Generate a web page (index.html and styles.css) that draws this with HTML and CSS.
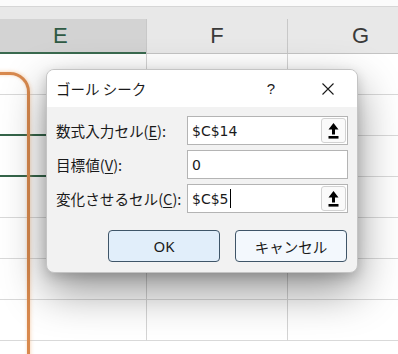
FILE: index.html
```html
<!DOCTYPE html>
<html lang="ja">
<head>
<meta charset="utf-8">
<link rel="stylesheet" href="styles.css">
</head>
<body>
<div class="sheet">
  <div class="topstrip"></div>
  <div class="band"></div>
  <div class="header">
    <div class="col col-e sel"><span class="ltr-e">E</span></div>
    <div class="col col-f"><span>F</span></div>
    <div class="col col-g"><span>G</span></div>
  </div>
  <div class="grid">
    <div class="row"><div class="cell c-e"></div><div class="cell c-f"></div><div class="cell c-g"></div></div>
    <div class="row"><div class="cell c-e green"></div><div class="cell c-f"></div><div class="cell c-g"></div></div>
    <div class="row"><div class="cell c-e green"></div><div class="cell c-f"></div><div class="cell c-g"></div></div>
    <div class="row"><div class="cell c-e"></div><div class="cell c-f"></div><div class="cell c-g"></div></div>
    <div class="row"><div class="cell c-e"></div><div class="cell c-f"></div><div class="cell c-g"></div></div>
    <div class="row"><div class="cell c-e"></div><div class="cell c-f"></div><div class="cell c-g"></div></div>
    <div class="row"><div class="cell c-e"></div><div class="cell c-f"></div><div class="cell c-g"></div></div>
  </div>

  <div class="marker"></div>

  <div class="dialog">
    <div class="titlebar">
      <div class="title">ゴール シーク</div>
      <div class="tbtn help">?</div>
      <div class="tbtn close">
        <svg width="12" height="12" viewBox="0 0 12 12"><path d="M0.5 0.5 L11.5 11.5 M11.5 0.5 L0.5 11.5" stroke="#1a1a1a" stroke-width="1.1" fill="none"/></svg>
      </div>
    </div>
    <div class="body">
      <div class="field">
        <label class="lbl">数式入力セル(<u>E</u>):</label>
        <div class="input"><span class="val">$C$14</span>
          <div class="ref"><svg width="11" height="16" viewBox="0 0 11 16"><path d="M5.5 0 L10.5 6.5 L7 6.5 L7 11.5 L4 11.5 L4 6.5 L0.5 6.5 Z" fill="#000"/><rect x="0.5" y="13" width="10" height="2.6" fill="#000"/></svg></div>
        </div>
      </div>
      <div class="field">
        <label class="lbl">目標値(<u>V</u>):</label>
        <div class="input"><span class="val">0</span></div>
      </div>
      <div class="field">
        <label class="lbl">変化させるセル(<u>C</u>):</label>
        <div class="input"><span class="val">$C$5</span><span class="caret"></span>
          <div class="ref"><svg width="11" height="16" viewBox="0 0 11 16"><path d="M5.5 0 L10.5 6.5 L7 6.5 L7 11.5 L4 11.5 L4 6.5 L0.5 6.5 Z" fill="#000"/><rect x="0.5" y="13" width="10" height="2.6" fill="#000"/></svg></div>
        </div>
      </div>
      <div class="buttons">
        <div class="btn ok">OK</div>
        <div class="btn cancel">キャンセル</div>
      </div>
    </div>
  </div>
</div>
</body>
</html>
```
FILE: styles.css
```css
html, body {
  margin: 0;
  padding: 0;
}
body {
  width: 398px;
  height: 354px;
  overflow: hidden;
  background: #fff;
  font-family: "Noto Sans CJK JP", "Noto Sans", sans-serif;
}
.sheet {
  position: relative;
  width: 398px;
  height: 354px;
  overflow: hidden;
  background: #fff;
}
.topstrip {
  height: 6px;
  background: #fbfbfb;
  border-bottom: 1px solid #d6d6d6;
}
.band {
  height: 12px;
  background: #e8e8e8;
}
.header {
  display: flex;
  height: 34px;
  background: #e8e8e8;
  border-bottom: 1px solid #c4c4c4;
}
.col {
  display: flex;
  align-items: center;
  justify-content: center;
  font-family: "Liberation Sans", Arial, sans-serif;
  font-size: 22px;
  color: #3a3a3a;
  box-sizing: border-box;
}
.col-e {
  width: 146px;
  justify-content: flex-start;
  padding-left: 53px;
  background: #d3d3d3;
  color: #2f5a44;
  border-bottom: 2px solid #3a6a4f;
  margin-bottom: -1px;
}
.col-f {
  width: 141px;
  border-left: 1px solid #c8c8c8;
}
.col-g {
  flex: 1;
  border-left: 1px solid #c8c8c8;
  justify-content: flex-start;
  padding-left: 64px;
}
.grid {
  display: flex;
  flex-direction: column;
}
.row {
  display: flex;
  height: 41px;
}
.cell {
  box-sizing: border-box;
  border-bottom: 1px solid #d9d9d9;
}
.c-e { width: 146px; }
.c-f { width: 141px; border-left: 1px solid #d4d4d4; }
.c-g { flex: 1; border-left: 1px solid #d4d4d4; }
.c-e.green {
  border-bottom: 2px solid #35654a;
}
.marker {
  position: absolute;
  left: -40px;
  top: 72px;
  width: 64px;
  height: 400px;
  border: 3px solid #d8894e;
  border-radius: 20px;
  box-shadow: 0 0 4px rgba(240, 170, 110, 0.6), inset 0 0 3px rgba(240, 170, 110, 0.5);
}
.dialog {
  position: absolute;
  left: 46px;
  top: 69px;
  width: 312px;
  height: 204px;
  box-sizing: border-box;
  border: 1px solid #c4c4c4;
  border-radius: 8px;
  background: #f2f2f2;
  overflow: hidden;
  box-shadow: 0 18px 44px rgba(0, 0, 0, 0.42), 0 4px 12px rgba(0, 0, 0, 0.16);
}
.titlebar {
  display: flex;
  align-items: center;
  height: 37px;
  background: #fff;
  padding-left: 9px;
  padding-right: 6px;
  gap: 11px;
}
.title {
  flex: 1;
  font-size: 14.5px;
  color: #1a1a1a;
}
.tbtn {
  width: 46px;
  height: 37px;
  display: flex;
  align-items: center;
  justify-content: center;
  color: #1a1a1a;
}
.help {
  font-family: "Liberation Sans", Arial, sans-serif;
  font-size: 15px;
}
.body {
  padding: 9px 9px 0 9px;
  display: flex;
  flex-direction: column;
  gap: 5px;
}
.field {
  display: flex;
  align-items: center;
  height: 29px;
}
.lbl {
  width: 131px;
  font-size: 14.6px;
  color: #1a1a1a;
  white-space: nowrap;
}
.lbl u {
  text-underline-offset: 2px;
}
.input {
  position: relative;
  flex: 1;
  height: 29px;
  box-sizing: border-box;
  border: 1px solid #b4b4b4;
  background: #fff;
  display: flex;
  align-items: center;
  padding-left: 4px;
  font-family: "DejaVu Sans", sans-serif;
  font-size: 14px;
  color: #1a1a1a;
}
.caret {
  display: inline-block;
  width: 1px;
  height: 19px;
  background: #000;
  margin-left: 1px;
}
.ref {
  position: absolute;
  right: 1px;
  top: 1px;
  width: 25px;
  height: 25px;
  box-sizing: border-box;
  border: 1px solid #d2d2d2;
  border-radius: 3px;
  background: #fafafa;
  display: flex;
  align-items: center;
  justify-content: center;
}
.buttons {
  display: flex;
  justify-content: flex-end;
  gap: 15px;
  margin-top: 12px;
  padding-right: 1px;
}
.btn {
  width: 112px;
  height: 32px;
  box-sizing: border-box;
  border: 1px solid #3f5568;
  border-radius: 4px;
  display: flex;
  align-items: center;
  justify-content: center;
  font-size: 14.5px;
  color: #1a1a1a;
}
.ok {
  background: #e1eefa;
  font-family: "Noto Sans", sans-serif;
  font-size: 15px;
}
.cancel {
  background: #f3f8fd;
}
```
